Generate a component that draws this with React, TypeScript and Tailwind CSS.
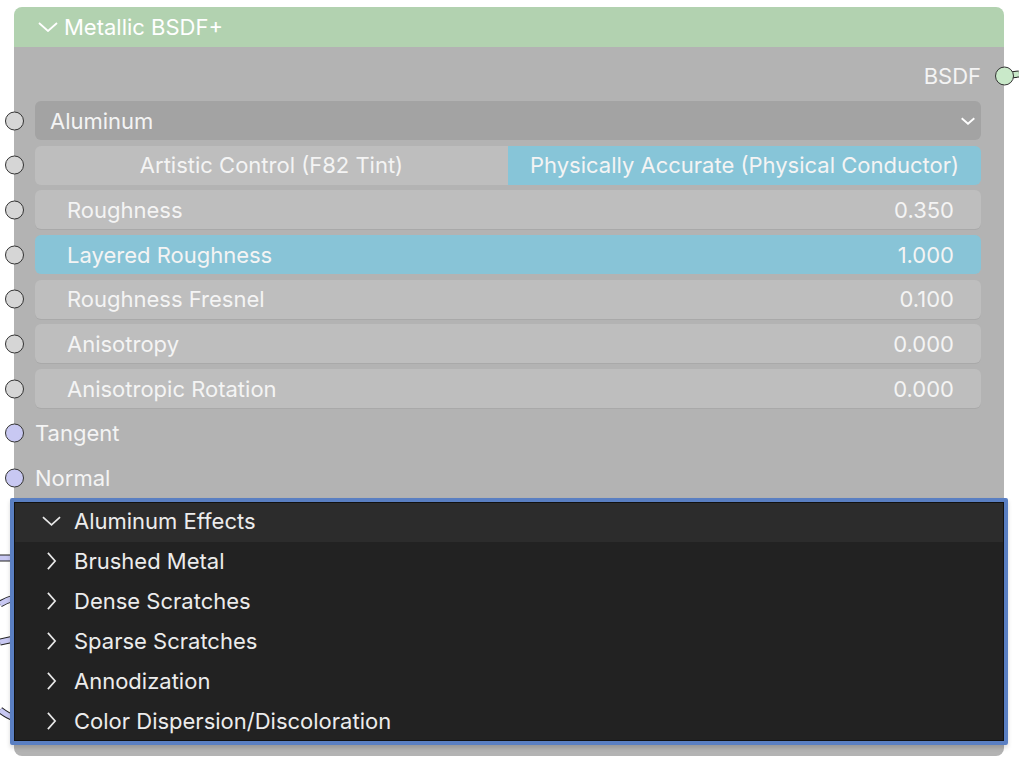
import React from "react";

const font = { fontFamily: "Inter, 'Noto Sans', sans-serif" };

type Slider = { label: string; value: string; active?: boolean };

const sliders: Slider[] = [
  { label: "Roughness", value: "0.350" },
  { label: "Layered Roughness", value: "1.000", active: true },
  { label: "Roughness Fresnel", value: "0.100" },
  { label: "Anisotropy", value: "0.000" },
  { label: "Anisotropic Rotation", value: "0.000" },
];

const panels = [
  "Brushed Metal",
  "Dense Scratches",
  "Sparse Scratches",
  "Annodization",
  "Color Dispersion/Discoloration",
];

function Socket({ color = "bg-[#d6d6d6]" }: { color?: string }) {
  return (
    <span
      className={`absolute block left-[-30px] top-1/2 -translate-y-1/2 w-[19px] h-[19px] rounded-full border border-[#333] ${color}`}
    />
  );
}

function ChevronDown({ className = "", width = 1.8 }: { className?: string; width?: number }) {
  return (
    <svg viewBox="0 0 20 10" className={className} fill="none" stroke="currentColor" strokeWidth={width}>
      <polyline points="1,1 10,9 19,1" />
    </svg>
  );
}

function ChevronRight({ className = "" }: { className?: string }) {
  return (
    <svg viewBox="0 0 10 20" className={className} fill="none" stroke="currentColor" strokeWidth="1.9">
      <polyline points="1,1 9,10 1,19" />
    </svg>
  );
}

export default function App() {
  return (
    <div className="relative w-[1019px] h-[762px] bg-white overflow-hidden text-[#f4f4f4]" style={font}>
      {/* wires on the left */}
      <svg className="absolute left-0 top-[540px]" width="16" height="200" viewBox="0 0 16 200">
        <g fill="none">
          <path d="M0 18 L14 18" stroke="#222" strokeWidth="7" />
          <path d="M0 18 L14 18" stroke="#c8c8f2" strokeWidth="5" />
          <path d="M0 64 Q7 60 14 58" stroke="#222" strokeWidth="7" />
          <path d="M0 64 Q7 60 14 58" stroke="#c8c8f2" strokeWidth="5" />
          <path d="M0 102 L14 99" stroke="#222" strokeWidth="7" />
          <path d="M0 102 L14 99" stroke="#c8c8f2" strokeWidth="5" />
          <path d="M0 170 Q8 176 14 178" stroke="#222" strokeWidth="7" />
          <path d="M0 170 Q8 176 14 178" stroke="#c8c8f2" strokeWidth="5" />
        </g>
      </svg>

      {/* output wire */}
      <svg className="absolute left-[1010px] top-[68px]" width="9" height="16" viewBox="0 0 9 16">
        <path d="M0 7 L9 6" stroke="#222" strokeWidth="7" />
        <path d="M0 7 L9 6" stroke="#c8e8c8" strokeWidth="5" />
      </svg>

      <div className="ml-[14px] mt-[7px] w-[990px]">
        {/* header */}
        <div className="h-[40px] bg-[#b2d2b0] rounded-t-[8px] flex items-center pl-[24px] gap-[6px]">
          <ChevronDown className="w-[20px] h-[10px] text-white" />
          <span className="text-[22px] leading-none text-white">Metallic BSDF+</span>
        </div>

        {/* body */}
        <div className="bg-[#b3b3b3] rounded-b-[8px] pt-[10px] pb-[11px]">
          <div className="relative h-[38px] flex items-center justify-end pr-[23px]">
            <span className="text-[22px] leading-none">BSDF</span>
            <span className="absolute block right-[-10px] top-1/2 -translate-y-1/2 w-[19px] h-[19px] rounded-full border border-[#333] bg-[#c9e9c9]" />
          </div>

          <div className="flex flex-col gap-[5.7px] pl-[21px] pr-[23px] mt-[6px]">
            <div className="relative h-[39px]">
              <Socket />
              <div className="h-full bg-[#a3a3a3] rounded-[6px] flex items-center justify-between pl-[15px] pr-[6px]">
                <span className="text-[22px] leading-none">Aluminum</span>
                <ChevronDown className="w-[14px] h-[8px] text-white" width={2.6} />
              </div>
            </div>

            <div className="relative h-[39px]">
              <Socket />
              <div className="h-full flex rounded-[6px] overflow-hidden">
                <div className="flex-1 bg-[#bebebe] flex items-center justify-center">
                  <span className="text-[22px] leading-none">Artistic Control (F82 Tint)</span>
                </div>
                <div className="flex-1 bg-[#87c5d8] flex items-center justify-center">
                  <span className="text-[22px] leading-none">Physically Accurate (Physical Conductor)</span>
                </div>
              </div>
            </div>

            {sliders.map((s) => (
              <div key={s.label} className="relative h-[39px]">
                <Socket />
                <div
                  className={`h-full rounded-[6px] flex items-center justify-between pl-[32px] pr-[27px] ${
                    s.active ? "bg-[#88c4d7]" : "bg-[#bebebe] shadow-[0_1px_0_#a9a9a9]"
                  }`}
                >
                  <span className="text-[22px] leading-none">{s.label}</span>
                  <span className="text-[22px] leading-none">{s.value}</span>
                </div>
              </div>
            ))}

            {["Tangent", "Normal"].map((n) => (
              <div key={n} className="relative h-[39px] flex items-center">
                <Socket color="bg-[#c8c8f2]" />
                <span className="text-[22px] leading-none">{n}</span>
              </div>
            ))}
          </div>

          {/* panels */}
          <div className="relative -mx-[4px] border-[4px] border-[#5a7fc2] rounded-[2px] shadow-[0_3px_4px_rgba(0,0,0,0.15)]">
            <div className="border border-[#111] bg-[#222222]">
              <div className="h-[39px] bg-[#2c2c2c] flex items-center pl-[27px] gap-[13px] pb-[3px]">
                <ChevronDown className="w-[19px] h-[10px] text-[#e8e8e8]" />
                <span className="text-[22px] leading-none text-[#ececec]">Aluminum Effects</span>
              </div>
              {panels.map((p) => (
                <div key={p} className="h-[39.8px] flex items-center pl-[31px] gap-[17px]">
                  <ChevronRight className="w-[11px] h-[18px] text-[#e8e8e8]" />
                  <span className="text-[22px] leading-none text-[#ececec]">{p}</span>
                </div>
              ))}
            </div>
          </div>
        </div>
      </div>
    </div>
  );
}
